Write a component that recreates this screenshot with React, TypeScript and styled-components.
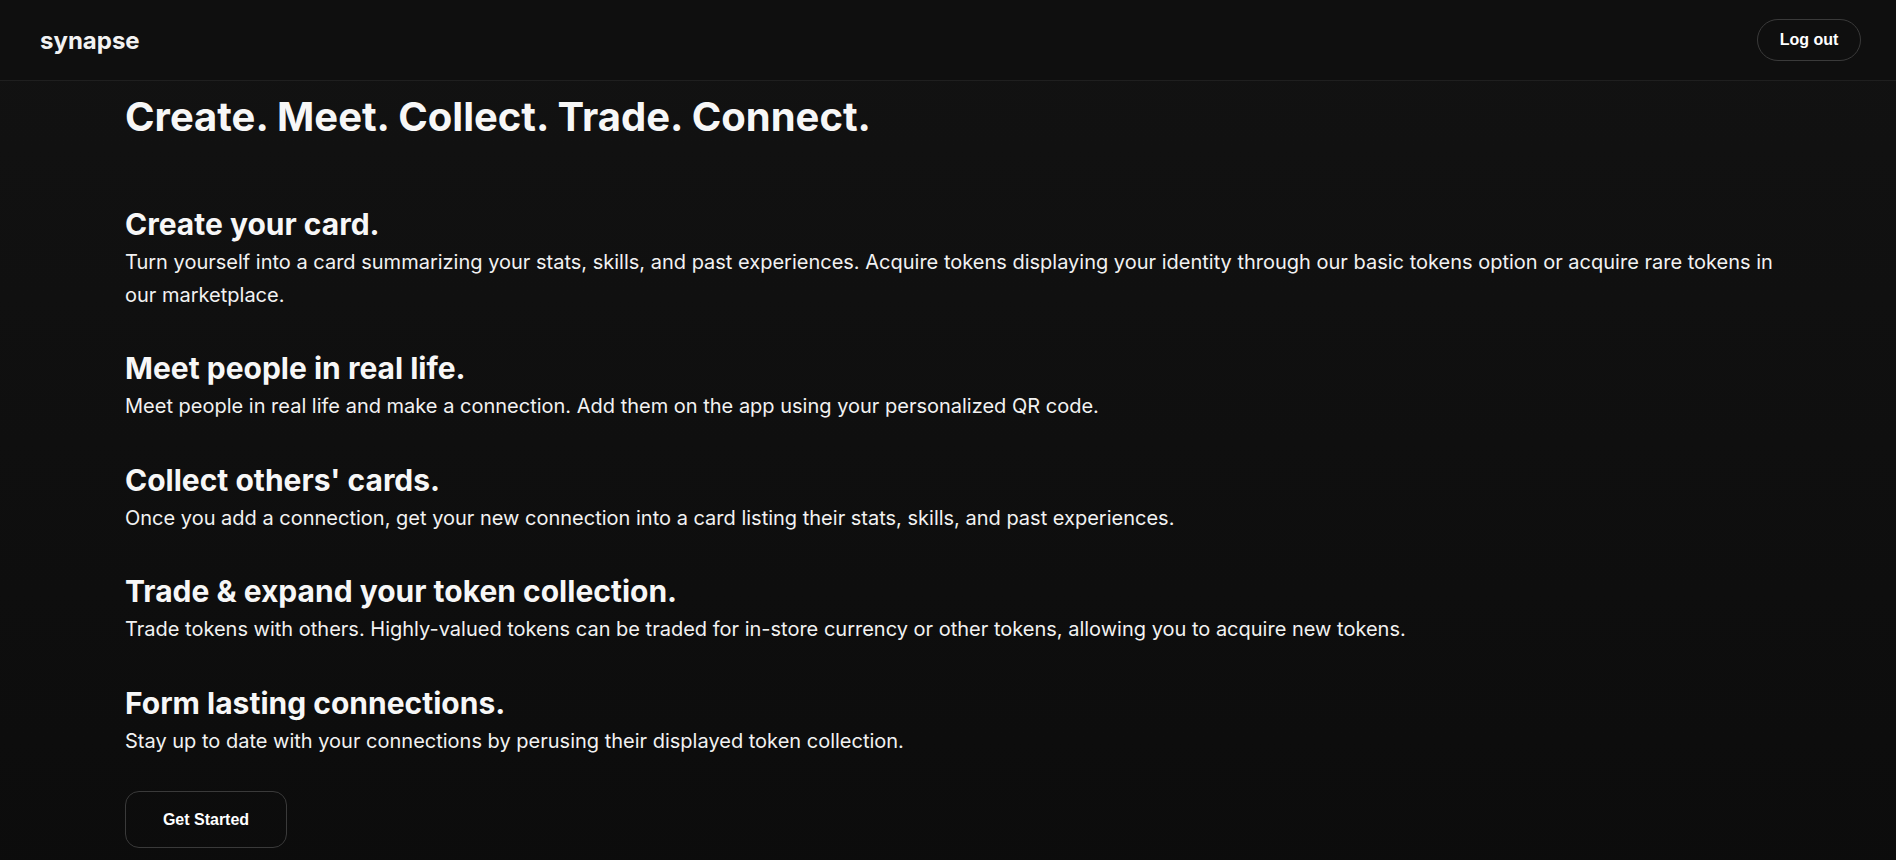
import styled, { createGlobalStyle } from 'styled-components';

const GlobalStyle = createGlobalStyle`
    html, body {
        margin: 0;
        padding: 0;
        background: #101010;
    }
    body {
        font-family: Inter, 'Noto Sans', sans-serif;
        color: #f7f7f7;
    }
    * {
        box-sizing: border-box;
    }
`;

const Page = styled.div`
    min-height: 100vh;
    background: linear-gradient(180deg, #121212 0%, #0c0c0c 100%);
`;

const Header = styled.header`
    height: 81px;
    display: flex;
    align-items: center;
    justify-content: space-between;
    padding: 0 35px 0 40px;
    border-bottom: 1px solid #1f1f1f;
    background-color: #0f0f0f;
`;

const Logo = styled.div`
    font-size: 24px;
    font-weight: 700;
    color: #f2f2f2;
`;

const OutlineButton = styled.button<{ $rounded: string; $w: number; $h: number }>`
    font-family: 'Liberation Sans', Arial, sans-serif;
    font-size: 16px;
    font-weight: 700;
    color: #ffffff;
    background: transparent;
    border: 1px solid #3a3a3a;
    border-radius: ${(p) => p.$rounded};
    width: ${(p) => p.$w}px;
    height: ${(p) => p.$h}px;
    cursor: pointer;
    &:hover {
        background-color: #1c1c1c;
    }
`;

const Main = styled.main`
    padding: 12px 120px 40px 125px;
`;

const Title = styled.h1`
    margin: 0 0 65px;
    font-size: 40px;
    line-height: 48px;
    font-weight: 700;
`;

const StepList = styled.div`
    display: flex;
    flex-direction: column;
    gap: 39px;
`;

const Step = styled.section`
    display: flex;
    flex-direction: column;
    gap: 4px;
`;

const StepTitle = styled.h2`
    margin: 0;
    font-size: 30px;
    line-height: 36px;
    font-weight: 700;
`;

const StepText = styled.p`
    margin: 0;
    font-size: 20px;
    line-height: 32.5px;
    font-weight: 400;
    color: #f2f2f2;
`;

const StartRow = styled.div`
    margin-top: 34px;
`;

const steps = [
    {
        title: 'Create your card.',
        text: 'Turn yourself into a card summarizing your stats, skills, and past experiences. Acquire tokens displaying your identity through our basic tokens option or acquire rare tokens in our marketplace.',
    },
    {
        title: 'Meet people in real life.',
        text: 'Meet people in real life and make a connection. Add them on the app using your personalized QR code.',
    },
    {
        title: "Collect others' cards.",
        text: 'Once you add a connection, get your new connection into a card listing their stats, skills, and past experiences.',
    },
    {
        title: 'Trade & expand your token collection.',
        text: 'Trade tokens with others. Highly-valued tokens can be traded for in-store currency or other tokens, allowing you to acquire new tokens.',
    },
    {
        title: 'Form lasting connections.',
        text: 'Stay up to date with your connections by perusing their displayed token collection.',
    },
];

const App = () => {
    return (
        <Page>
            <GlobalStyle />
            <Header>
                <Logo>synapse</Logo>
                <OutlineButton $rounded="999px" $w={104} $h={42}>
                    Log out
                </OutlineButton>
            </Header>
            <Main>
                <Title>Create. Meet. Collect. Trade. Connect.</Title>
                <StepList>
                    {steps.map((step) => (
                        <Step key={step.title}>
                            <StepTitle>{step.title}</StepTitle>
                            <StepText>{step.text}</StepText>
                        </Step>
                    ))}
                </StepList>
                <StartRow>
                    <OutlineButton $rounded="14px" $w={162} $h={57}>
                        Get Started
                    </OutlineButton>
                </StartRow>
            </Main>
        </Page>
    );
};

export default App;
